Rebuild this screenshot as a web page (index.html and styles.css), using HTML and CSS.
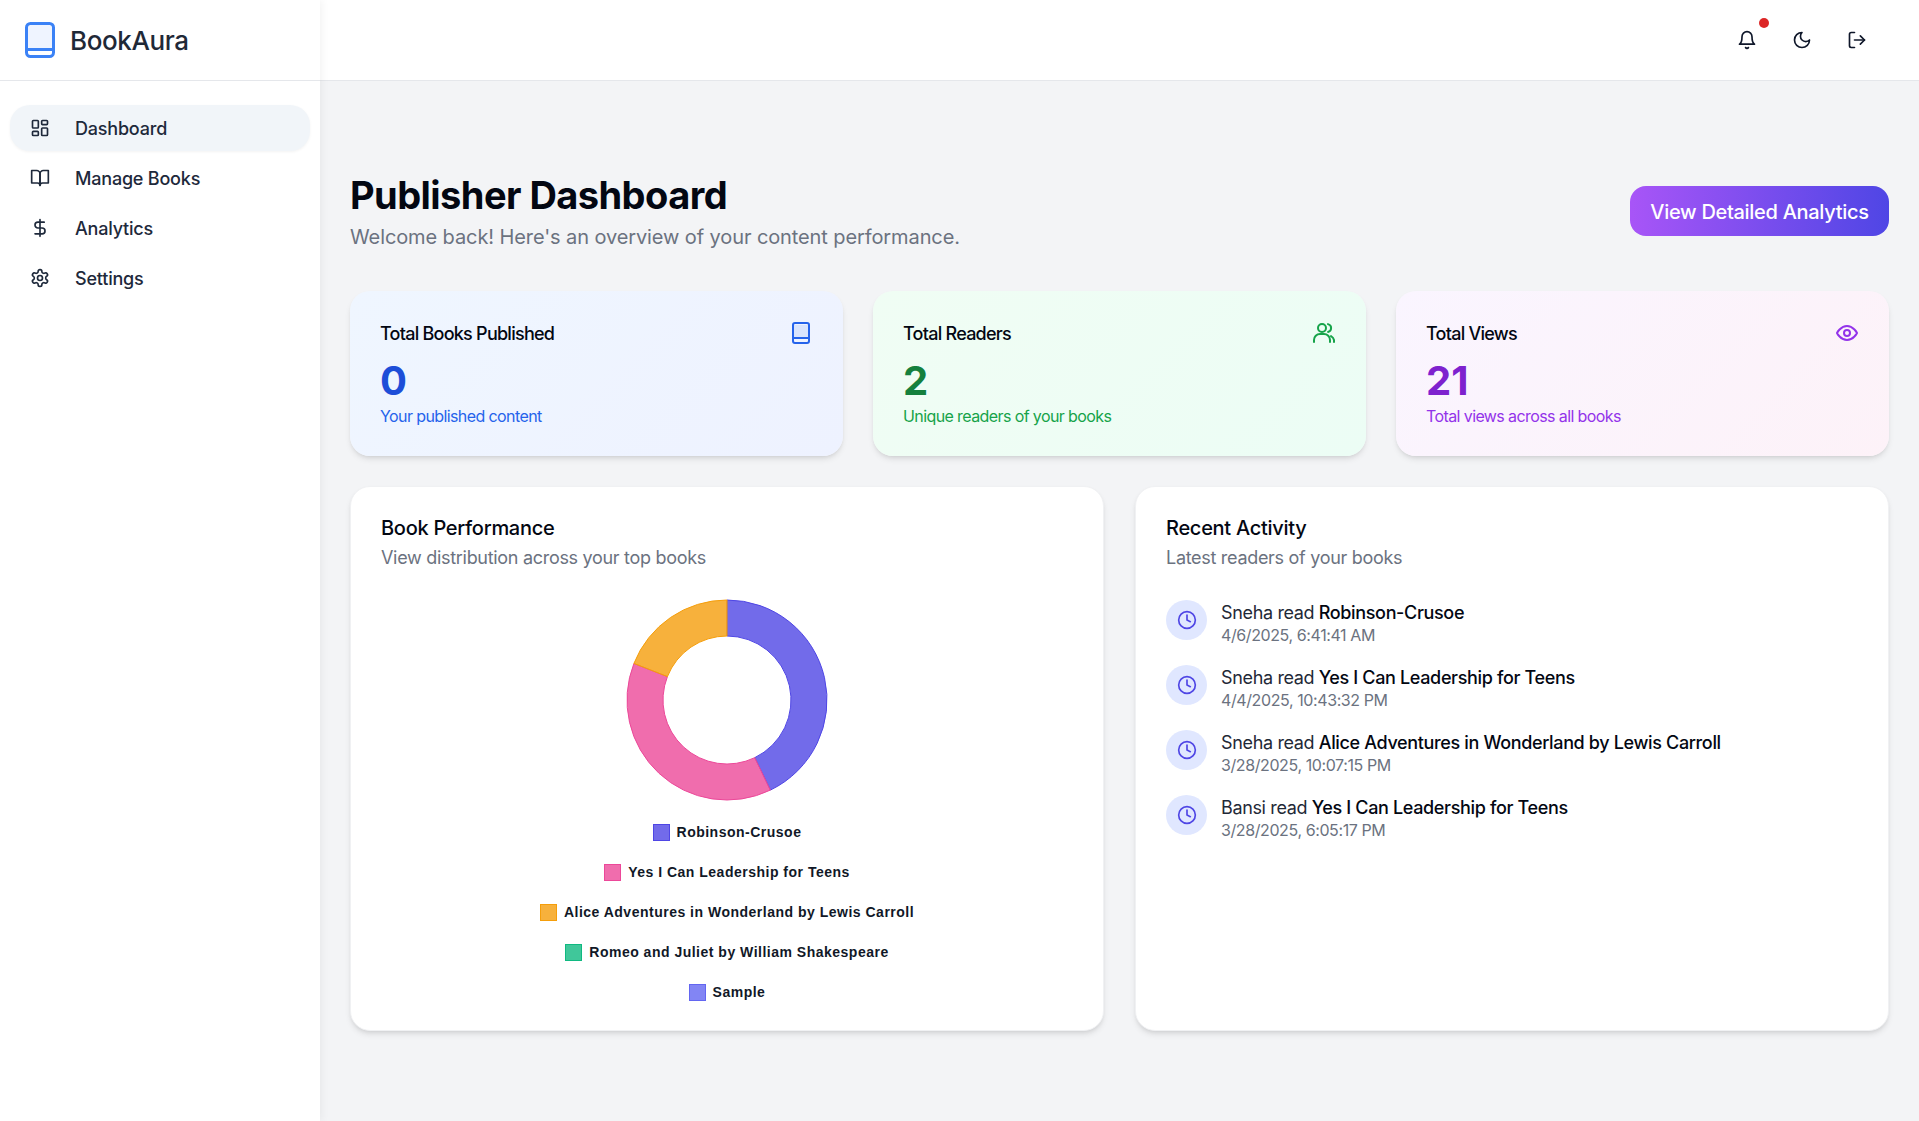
FILE: index.html
```html
<!DOCTYPE html>
<html lang="en">
<head>
    <meta charset="UTF-8">
    <title>BookAura - Publisher Dashboard</title>
    <link rel="stylesheet" href="styles.css">
</head>
<body>
    <aside class="sidebar">
        <div class="brand">
            <svg class="brand-icon" viewBox="0 0 30 36">
                <path class="brand-page" d="M3 3h24v24H3z"/>
                <rect class="brand-line" x="1.5" y="1.5" width="27" height="33" rx="4"/>
                <path class="brand-line" d="M1.5 27.5h27"/>
            </svg>
            <span class="brand-name">BookAura</span>
        </div>
        <nav class="nav">
            <a class="nav-item active">
                <svg class="icon" viewBox="0 0 24 24"><rect x="3" y="3" width="7" height="9" rx="1"/><rect x="14" y="3" width="7" height="5" rx="1"/><rect x="14" y="12" width="7" height="9" rx="1"/><rect x="3" y="16" width="7" height="5" rx="1"/></svg>
                Dashboard
            </a>
            <a class="nav-item">
                <svg class="icon" viewBox="0 0 24 24"><path d="M2 3h6a4 4 0 0 1 4 4v14a3 3 0 0 0-3-3H2z"/><path d="M22 3h-6a4 4 0 0 0-4 4v14a3 3 0 0 1 3-3h7z"/></svg>
                Manage Books
            </a>
            <a class="nav-item">
                <svg class="icon" viewBox="0 0 24 24"><path d="M12 2v20"/><path d="M17 5H9.5a3.5 3.5 0 0 0 0 7h5a3.5 3.5 0 0 1 0 7H6"/></svg>
                Analytics
            </a>
            <a class="nav-item">
                <svg class="icon" viewBox="0 0 24 24"><path d="M12.22 2h-.44a2 2 0 0 0-2 2v.18a2 2 0 0 1-1 1.73l-.43.25a2 2 0 0 1-2 0l-.15-.08a2 2 0 0 0-2.73.73l-.22.38a2 2 0 0 0 .73 2.73l.15.1a2 2 0 0 1 1 1.72v.51a2 2 0 0 1-1 1.74l-.15.09a2 2 0 0 0-.73 2.73l.22.38a2 2 0 0 0 2.73.73l.15-.08a2 2 0 0 1 2 0l.43.25a2 2 0 0 1 1 1.73V20a2 2 0 0 0 2 2h.44a2 2 0 0 0 2-2v-.18a2 2 0 0 1 1-1.73l.43-.25a2 2 0 0 1 2 0l.15.08a2 2 0 0 0 2.73-.73l.22-.39a2 2 0 0 0-.73-2.73l-.15-.08a2 2 0 0 1-1-1.74v-.5a2 2 0 0 1 1-1.74l.15-.09a2 2 0 0 0 .73-2.73l-.22-.38a2 2 0 0 0-2.73-.73l-.15.08a2 2 0 0 1-2 0l-.43-.25a2 2 0 0 1-1-1.73V4a2 2 0 0 0-2-2z"/><circle cx="12" cy="12" r="3"/></svg>
                Settings
            </a>
        </nav>
    </aside>

    <div class="page">
        <header class="topbar">
            <span class="topbar-btn">
                <svg class="icon" viewBox="0 0 24 24"><path d="M6 8a6 6 0 0 1 12 0c0 7 3 9 3 9H3s3-2 3-9"/><path d="M10.3 21a1.94 1.94 0 0 0 3.4 0"/></svg>
                <span class="dot"></span>
            </span>
            <span class="topbar-btn">
                <svg class="icon" viewBox="0 0 24 24"><path d="M12 3a6 6 0 0 0 9 9 9 9 0 1 1-9-9Z"/></svg>
            </span>
            <span class="topbar-btn">
                <svg class="icon" viewBox="0 0 24 24"><path d="M9 21H5a2 2 0 0 1-2-2V5a2 2 0 0 1 2-2h4"/><path d="M16 17l5-5-5-5"/><path d="M21 12H9"/></svg>
            </span>
        </header>

        <main class="main">
            <div class="heading">
                <div>
                    <h1>Publisher Dashboard</h1>
                    <p class="welcome">Welcome back! Here's an overview of your content performance.</p>
                </div>
                <a class="cta">View Detailed Analytics</a>
            </div>

            <section class="stats">
                <div class="stat stat-blue">
                    <div class="stat-top">
                        <span>Total Books Published</span>
                        <svg class="icon" viewBox="0 0 24 24"><path class="icon-tint" d="M4 4h16v13H4z"/><rect x="4" y="2" width="16" height="20" rx="2"/><path d="M4 17h16"/></svg>
                    </div>
                    <div class="stat-num">0</div>
                    <div class="stat-note">Your published content</div>
                </div>
                <div class="stat stat-green">
                    <div class="stat-top">
                        <span>Total Readers</span>
                        <svg class="icon" viewBox="0 0 24 24"><path d="M2 21v-2a6 6 0 0 1 6-6h4a6 6 0 0 1 6 6v2"/><circle cx="10" cy="7" r="4"/><path d="M16 3.1a4 4 0 0 1 0 7.8"/><path d="M22 21v-2a6 6 0 0 0-3-3.9"/></svg>
                    </div>
                    <div class="stat-num">2</div>
                    <div class="stat-note">Unique readers of your books</div>
                </div>
                <div class="stat stat-purple">
                    <div class="stat-top">
                        <span>Total Views</span>
                        <svg class="icon" viewBox="0 0 24 24"><path d="M2 12s3.5-7 10-7 10 7 10 7-3.5 7-10 7-10-7-10-7Z"/><circle cx="12" cy="12" r="3"/></svg>
                    </div>
                    <div class="stat-num">21</div>
                    <div class="stat-note">Total views across all books</div>
                </div>
            </section>

            <section class="panels">
                <div class="panel">
                    <h2>Book Performance</h2>
                    <p class="panel-sub">View distribution across your top books</p>
                    <svg class="donut" viewBox="0 0 204 204">
                        <path class="seg-a" d="M102 2A100 100 0 0 1 145.39 192.1L129.77 159.66A64 64 0 0 0 102 38Z"/>
                        <path class="seg-b" d="M145.39 192.1A100 100 0 0 1 8.91 65.47L42.42 78.62A64 64 0 0 0 129.77 159.66Z"/>
                        <path class="seg-c" d="M8.91 65.47A100 100 0 0 1 102 2V38A64 64 0 0 0 42.42 78.62Z"/>
                    </svg>
                    <ul class="legend">
                        <li><i class="swatch seg-a"></i>Robinson-Crusoe</li>
                        <li><i class="swatch seg-b"></i>Yes I Can Leadership for Teens</li>
                        <li><i class="swatch seg-c"></i>Alice Adventures in Wonderland by Lewis Carroll</li>
                        <li><i class="swatch seg-d"></i>Romeo and Juliet by William Shakespeare</li>
                        <li><i class="swatch seg-e"></i>Sample</li>
                    </ul>
                </div>
                <div class="panel">
                    <h2>Recent Activity</h2>
                    <p class="panel-sub">Latest readers of your books</p>
                    <ul class="activity">
                        <li>
                            <span class="clock"><svg class="icon" viewBox="0 0 24 24"><circle cx="12" cy="12" r="10"/><path d="M12 6v6l4 2"/></svg></span>
                            <div>
                                <div class="act-title"><span class="who">Sneha read</span> Robinson-Crusoe</div>
                                <div class="act-time">4/6/2025, 6:41:41 AM</div>
                            </div>
                        </li>
                        <li>
                            <span class="clock"><svg class="icon" viewBox="0 0 24 24"><circle cx="12" cy="12" r="10"/><path d="M12 6v6l4 2"/></svg></span>
                            <div>
                                <div class="act-title"><span class="who">Sneha read</span> Yes I Can Leadership for Teens</div>
                                <div class="act-time">4/4/2025, 10:43:32 PM</div>
                            </div>
                        </li>
                        <li>
                            <span class="clock"><svg class="icon" viewBox="0 0 24 24"><circle cx="12" cy="12" r="10"/><path d="M12 6v6l4 2"/></svg></span>
                            <div>
                                <div class="act-title"><span class="who">Sneha read</span> Alice Adventures in Wonderland by Lewis Carroll</div>
                                <div class="act-time">3/28/2025, 10:07:15 PM</div>
                            </div>
                        </li>
                        <li>
                            <span class="clock"><svg class="icon" viewBox="0 0 24 24"><circle cx="12" cy="12" r="10"/><path d="M12 6v6l4 2"/></svg></span>
                            <div>
                                <div class="act-title"><span class="who">Bansi read</span> Yes I Can Leadership for Teens</div>
                                <div class="act-time">3/28/2025, 6:05:17 PM</div>
                            </div>
                        </li>
                    </ul>
                </div>
            </section>
        </main>
    </div>
</body>
</html>
```

FILE: styles.css
```css
*{
    margin: 0;
    padding: 0;
    box-sizing: border-box;
}
body{
    display: flex;
    height: 1121px;
    overflow: hidden;
    background: #f3f4f6;
    color: #0f172a;
    font-family: "Inter", "Liberation Sans", sans-serif;
}
ul{
    list-style: none;
}
.icon{
    width: 20px;
    height: 20px;
    flex: none;
    fill: none;
    stroke: currentColor;
    stroke-width: 2;
    stroke-linecap: round;
    stroke-linejoin: round;
}
.icon .icon-tint{
    fill: currentColor;
    fill-opacity: .1;
    stroke: none;
}

/* sidebar */
.sidebar{
    width: 320px;
    flex: none;
    background: #fff;
    box-shadow: 2px 0 8px rgba(0,0,0,.05);
    z-index: 2;
}
.brand{
    height: 81px;
    display: flex;
    align-items: center;
    gap: 15px;
    padding-left: 25px;
    border-bottom: 1px solid #e5e7eb;
}
.brand-icon{
    width: 30px;
    height: 36px;
    flex: none;
}
.brand-page{
    fill: #eff4ff;
}
.brand-line{
    fill: none;
    stroke: #3b82f6;
    stroke-width: 3;
}
.brand-name{
    font-size: 26px;
    font-weight: 500;
    letter-spacing: -.4px;
    color: #1f2937;
}
.nav{
    display: flex;
    flex-direction: column;
    gap: 4px;
    padding: 24px 10px;
}
.nav-item{
    height: 46px;
    display: flex;
    align-items: center;
    gap: 25px;
    padding-left: 20px;
    border-radius: 20px;
    font-size: 18px;
    font-weight: 450;
    letter-spacing: -.2px;
    color: #1e293b;
}
.nav-item.active{
    background: #f1f5f9;
    box-shadow: 0 1px 3px rgba(0,0,0,.05);
}

/* top bar */
.page{
    flex: 1;
    min-width: 0;
}
.topbar{
    height: 81px;
    display: flex;
    align-items: center;
    justify-content: flex-end;
    gap: 35px;
    padding-right: 52px;
    background: #fff;
    border-bottom: 1px solid #e5e7eb;
}
.topbar-btn{
    position: relative;
    display: flex;
}
.dot{
    position: absolute;
    top: -12px;
    right: -12px;
    width: 10px;
    height: 10px;
    border-radius: 50%;
    background: #dc2626;
}

/* main */
.main{
    padding: 92px 30px 0;
}
.heading{
    display: flex;
    justify-content: space-between;
    align-items: center;
    margin-bottom: 40px;
}
h1{
    font-size: 38px;
    line-height: 44px;
    font-weight: 700;
    letter-spacing: -.55px;
    color: #030712;
}
.welcome{
    font-size: 20px;
    line-height: 28px;
    margin-top: 6px;
    letter-spacing: -.1px;
    color: #6b7280;
}
.cta{
    width: 259px;
    height: 50px;
    margin-bottom: 3px;
    padding-top: 2px;
    display: flex;
    align-items: center;
    justify-content: center;
    border-radius: 16px;
    background: linear-gradient(90deg, #a855f7, #4f46e5);
    color: #fff;
    font-size: 20px;
    font-weight: 450;
    letter-spacing: -.3px;
}

.stats{
    display: grid;
    grid-template-columns: repeat(3, 1fr);
    gap: 30px;
    margin-bottom: 30px;
}
.stat{
    height: 165px;
    padding: 30px;
    border-radius: 20px;
    box-shadow: 0 4px 6px -1px rgba(0,0,0,.1), 0 2px 4px -2px rgba(0,0,0,.1);
}
.stat-blue{
    background: linear-gradient(135deg, #eff6ff, #eef2ff);
}
.stat-green{
    background: linear-gradient(135deg, #f0fdf4, #ecfdf5);
}
.stat-purple{
    background: linear-gradient(135deg, #faf5ff, #fdf2f8);
}
.stat-top{
    display: flex;
    justify-content: space-between;
    align-items: center;
    height: 24px;
    font-size: 18px;
    font-weight: 450;
    letter-spacing: -.75px;
    color: #030712;
}
.stat-top .icon{
    width: 24px;
    height: 24px;
}
.stat-num{
    margin-top: 14px;
    font-size: 40px;
    line-height: 44px;
    font-weight: 700;
}
.stat-note{
    margin-top: 1px;
    font-size: 16px;
    line-height: 24px;
    letter-spacing: -.6px;
}
.stat-blue .icon, .stat-blue .stat-note{ color: #2563eb; }
.stat-blue .stat-num{ color: #1d4ed8; }
.stat-green .icon, .stat-green .stat-note{ color: #16a34a; }
.stat-green .stat-num{ color: #15803d; }
.stat-purple .icon, .stat-purple .stat-note{ color: #9333ea; }
.stat-purple .stat-num{ color: #7e22ce; }

.panels{
    display: grid;
    grid-template-columns: 1fr 1fr;
    gap: 31px;
}
.panel{
    height: 545px;
    padding: 27px 30px;
    background: #fff;
    border-radius: 20px;
    border: 1px solid #f0f1f3;
    box-shadow: 0 4px 6px -1px rgba(0,0,0,.1), 0 2px 4px -2px rgba(0,0,0,.1);
}
h2{
    font-size: 20px;
    line-height: 28px;
    font-weight: 500;
    letter-spacing: -.28px;
    color: #030712;
}
.panel-sub{
    margin-top: 2px;
    font-size: 18px;
    line-height: 28px;
    letter-spacing: -.3px;
    color: #6b7280;
}

/* chart */
.donut{
    display: block;
    width: 204px;
    height: 204px;
    margin: 26px auto 0;
}
.legend{
    margin-top: 10px;
    font-family: "Liberation Sans", Arial, sans-serif;
    font-size: 14px;
    font-weight: 700;
    letter-spacing: .5px;
    color: #111827;
}
.legend li{
    height: 40px;
    display: flex;
    align-items: center;
    justify-content: center;
    gap: 7px;
}
.swatch{
    width: 17px;
    height: 17px;
    border-width: 1px;
    border-style: solid;
}
.seg-a{ background: rgba(79,70,229,.8); border-color: #4f46e5; fill: rgba(79,70,229,.8); stroke: #4f46e5; }
.seg-b{ background: rgba(236,72,153,.8); border-color: #ec4899; fill: rgba(236,72,153,.8); stroke: #ec4899; }
.seg-c{ background: rgba(245,158,11,.8); border-color: #f59e0b; fill: rgba(245,158,11,.8); stroke: #f59e0b; }
.seg-d{ background: rgba(16,185,129,.8); border-color: #10b981; }
.seg-e{ background: rgba(99,102,241,.8); border-color: #6366f1; }

/* activity */
.activity{
    margin-top: 28px;
    display: flex;
    flex-direction: column;
    gap: 21px;
}
.activity li{
    display: flex;
    align-items: flex-start;
    gap: 14px;
}
.clock{
    width: 41px;
    height: 40px;
    flex: none;
    display: flex;
    align-items: center;
    justify-content: center;
    border-radius: 50%;
    background: #e0e7ff;
    color: #4f46e5;
}
.act-title{
    font-size: 18px;
    line-height: 26px;
    font-weight: 500;
    letter-spacing: -.35px;
    color: #030712;
}
.who{
    font-weight: 400;
    color: #1f2937;
}
.act-time{
    font-size: 16px;
    line-height: 18px;
    letter-spacing: -.4px;
    color: #6b7280;
}
```
